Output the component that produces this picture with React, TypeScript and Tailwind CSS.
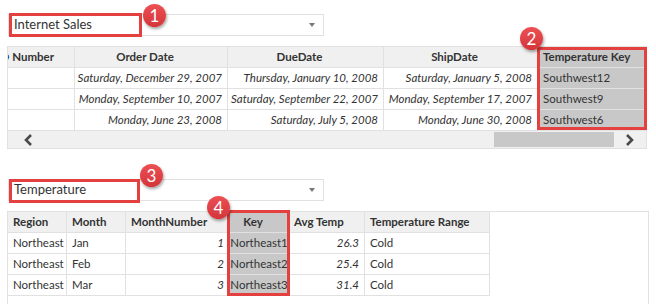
const font = { fontFamily: 'Lato, "Noto Sans", sans-serif' };

type Col = { w: string; label: string; align: "left" | "center" | "clip"; italic?: boolean; sel?: boolean };

const salesCols: Col[] = [
  { w: "w-[67px]", label: "SO Number", align: "clip" },
  { w: "w-[153px]", label: "Order Date", align: "center", italic: true },
  { w: "w-[156px]", label: "DueDate", align: "center", italic: true },
  { w: "w-[154px]", label: "ShipDate", align: "center", italic: true },
  { w: "w-[108px]", label: "Temperature Key", align: "left", sel: true },
];

const salesRows = [
  ["", "Saturday, December 29, 2007", "Thursday, January 10, 2008", "Saturday, January 5, 2008", "Southwest12"],
  ["", "Monday, September 10, 2007", "Saturday, September 22, 2007", "Monday, September 17, 2007", "Southwest9"],
  ["", "Monday, June 23, 2008", "Saturday, July 5, 2008", "Monday, June 30, 2008", "Southwest6"],
];

const tempCols: Col[] = [
  { w: "w-[59px]", label: "Region", align: "left" },
  { w: "w-[59px]", label: "Month", align: "left" },
  { w: "w-[104px]", label: "MonthNumber", align: "left", italic: true },
  { w: "w-[59px]", label: "Key", align: "center", sel: true },
  { w: "w-[76px]", label: "Avg Temp", align: "left", italic: true },
  { w: "w-[125px]", label: "Temperature Range", align: "left" },
];

const tempRows = [
  ["Northeast", "Jan", "1", "Northeast1", "26.3", "Cold"],
  ["Northeast", "Feb", "2", "Northeast2", "25.4", "Cold"],
  ["Northeast", "Mar", "3", "Northeast3", "31.4", "Cold"],
];

function Dropdown({ label }: { label: string }) {
  return (
    <div className="ml-[8px] w-[316px] h-[22px] border border-[#e1e1e1] bg-white flex items-center justify-between pl-[5px] pr-[8px] text-[13px] text-[#333]">
      <span>{label}</span>
      <span className="w-0 h-0 border-l-[3px] border-r-[3px] border-t-[4px] border-l-transparent border-r-transparent border-t-[#777]" />
    </div>
  );
}

function Badge({ n, className }: { n: number; className: string }) {
  return (
    <div
      className={`absolute w-[23px] h-[23px] rounded-full bg-gradient-to-b from-[#ec5053] to-[#d4343a] shadow-[1px_2px_3px_rgba(0,0,0,0.35)] text-white text-[17px] leading-[23px] text-center ${className}`}
    >
      {n}
    </div>
  );
}

function HeaderCell({ c }: { c: Col }) {
  const bg = c.sel ? "bg-[#c8c8c8]" : "bg-[#f0f0f0]";
  if (c.align === "clip") {
    return (
      <div className={`${c.w} h-[21px] border-r border-b border-[#e1e1e1] ${bg} flex justify-end items-center overflow-hidden pr-[20px] font-bold whitespace-nowrap`}>
        <span>{c.label}</span>
      </div>
    );
  }
  const al = c.align === "center" ? "justify-center pr-[12px]" : "justify-start pl-[5px]";
  return (
    <div className={`${c.w} h-[21px] border-r border-b border-[#e1e1e1] ${bg} flex items-center ${al} font-bold whitespace-nowrap overflow-hidden`}>
      {c.label}
    </div>
  );
}

function DataCell({ c, v }: { c: Col; v: string }) {
  const bg = c.sel ? "bg-[#c8c8c8]" : "bg-white";
  const al = c.italic
    ? "justify-end pr-[5px] italic"
    : c.align === "center"
      ? "justify-center"
      : "justify-start pl-[5px]";
  return (
    <div className={`${c.w} h-[21px] border-r border-b border-[#e1e1e1] ${bg} flex items-center ${al} whitespace-nowrap overflow-hidden`}>
      {v}
    </div>
  );
}

function Chevron({ dir }: { dir: "left" | "right" }) {
  return (
    <svg width="10" height="12" viewBox="0 0 10 12">
      <polyline
        points={dir === "left" ? "8,1 3,6 8,11" : "2,1 7,6 2,11"}
        fill="none"
        stroke="#4a4a4a"
        strokeWidth="2.6"
      />
    </svg>
  );
}

export default function App() {
  return (
    <div className="relative w-[656px] h-[304px] overflow-hidden bg-white text-[11.5px] text-[#333]" style={font}>
      <div className="pt-[14px]">
        <Dropdown label="Internet Sales" />
      </div>

      <div className="mt-[10px] ml-[7px] w-[640px] border border-[#e1e1e1]">
        <div className="flex">
          {salesCols.map((c) => (
            <HeaderCell key={c.label} c={c} />
          ))}
        </div>
        {salesRows.map((r, i) => (
          <div key={i} className="flex">
            {salesCols.map((c, j) => (
              <DataCell key={j} c={c} v={r[j]} />
            ))}
          </div>
        ))}
        <div className="h-[17px] bg-[#f0f0f0] flex items-center">
          <div className="w-[40px] flex justify-center">
            <Chevron dir="left" />
          </div>
          <div className="flex-1" />
          <div className="w-[120px] h-[15px] bg-[#c8c8c8]" />
          <div className="w-[32px] flex justify-center">
            <Chevron dir="right" />
          </div>
        </div>
      </div>

      <div className="mt-[30px]">
        <Dropdown label="Temperature" />
      </div>

      <div className="mt-[10px] ml-[7px] w-[642px] h-[110px] border border-[#e1e1e1]">
        <div className="flex">
          {tempCols.map((c) => (
            <HeaderCell key={c.label} c={c} />
          ))}
        </div>
        {tempRows.map((r, i) => (
          <div key={i} className="flex">
            {tempCols.map((c, j) => (
              <DataCell key={j} c={c} v={r[j]} />
            ))}
          </div>
        ))}
      </div>

      {/* annotation boxes */}
      <div className="absolute left-[9px] top-[13px] w-[133px] h-[24px] border-[3px] border-[#e3403f]" />
      <div className="absolute left-[537px] top-[47px] w-[110px] h-[83px] border-[3px] border-[#e3403f]" />
      <div className="absolute left-[9px] top-[179px] w-[131px] h-[24px] border-[3px] border-[#e3403f]" />
      <div className="absolute left-[227px] top-[210px] w-[63px] h-[86px] border-[3px] border-[#e3403f]" />

      <Badge n={1} className="left-[143px] top-[4px]" />
      <Badge n={2} className="left-[520px] top-[27px]" />
      <Badge n={3} className="left-[140px] top-[164px]" />
      <Badge n={4} className="left-[207px] top-[196px]" />
    </div>
  );
}
